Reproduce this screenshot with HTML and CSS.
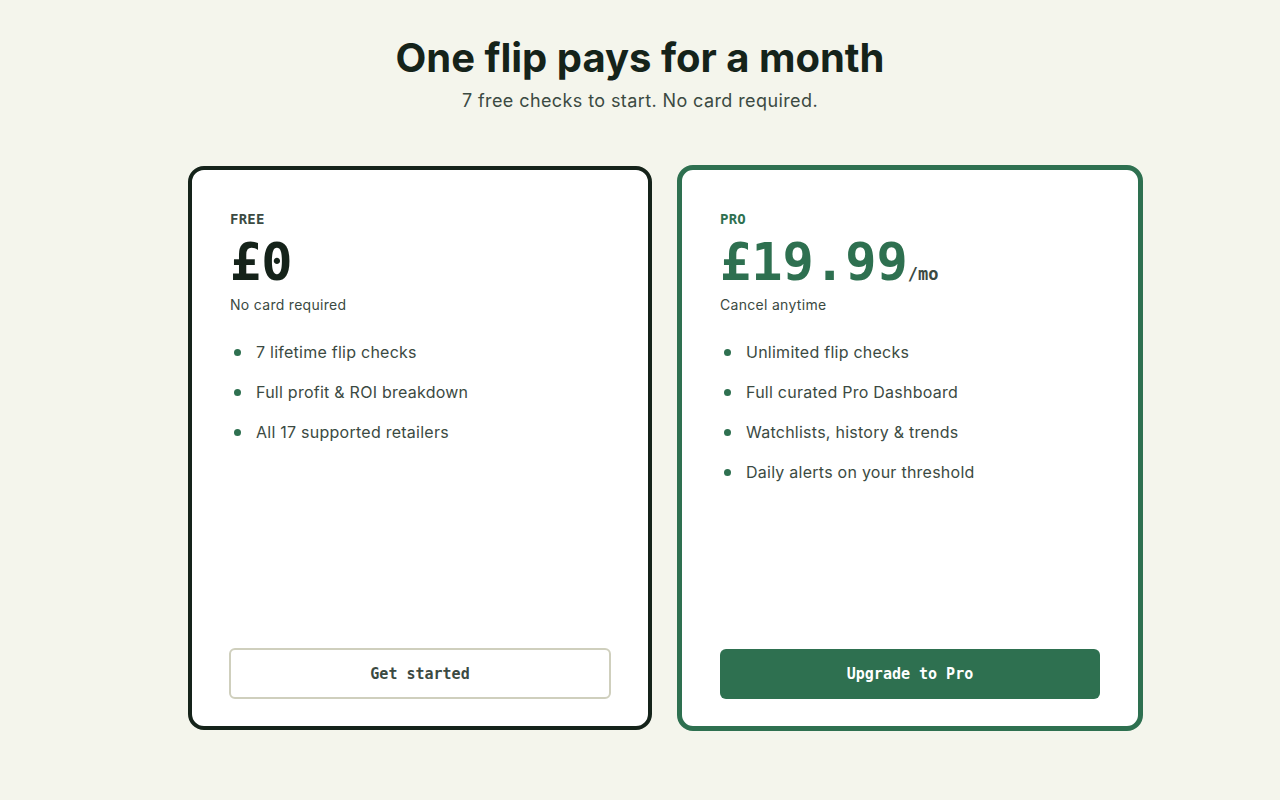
FILE: index.html
```html
<!DOCTYPE html>
<html lang="en">
<head>
    <meta charset="UTF-8">
    <meta name="viewport" content="width=device-width, initial-scale=1.0">
    <title>Pricing</title>
    <link rel="stylesheet" href="styles.css">
</head>
<body>
<section class="pricing">
    <div class="pricing-head">
        <h1>One flip pays for a month</h1>
        <p>7 free checks to start. No card required.</p>
    </div>

    <div class="plans">
        <!-- Free plan -->
        <div class="plan plan-free">
            <div class="plan-name">FREE</div>
            <div class="plan-price">£0</div>
            <div class="plan-note">No card required</div>
            <ul class="plan-features">
                <li>7 lifetime flip checks</li>
                <li>Full profit &amp; ROI breakdown</li>
                <li>All 17 supported retailers</li>
            </ul>
            <button class="plan-button">Get started</button>
        </div>

        <!-- Pro plan -->
        <div class="plan plan-pro">
            <div class="plan-name">PRO</div>
            <div class="plan-price">£19.99<span class="per">/mo</span></div>
            <div class="plan-note">Cancel anytime</div>
            <ul class="plan-features">
                <li>Unlimited flip checks</li>
                <li>Full curated Pro Dashboard</li>
                <li>Watchlists, history &amp; trends</li>
                <li>Daily alerts on your threshold</li>
            </ul>
            <button class="plan-button">Upgrade to Pro</button>
        </div>
    </div>
</section>
</body>
</html>
```

FILE: styles.css
```css
body {
    margin: 0;
    background-color: #f4f5ec;
    font-family: Inter, "Open Sans", sans-serif;
    color: #3b4a42;
}
.pricing {
    padding-top: 34px;
}
.pricing-head {
    text-align: center;
}
.pricing-head h1 {
    margin: 0;
    font-size: 40px;
    font-weight: 700;
    line-height: 48px;
    color: #15231a;
}
.pricing-head p {
    margin: 8px 0 0;
    font-size: 18px;
    letter-spacing: 0.4px;
    line-height: 22px;
    color: #3b4a42;
}
.plans {
    display: flex;
    justify-content: center;
    padding-left: 51px;
    margin-top: 54px;
    gap: 25px;
}
.plan {
    box-sizing: border-box;
    display: flex;
    flex-direction: column;
    background-color: #fff;
    border-radius: 16px;
    padding: 41px 37px 27px 38px;
}
.plan-free {
    width: 464px;
    height: 564px;
    border: 4px solid #15231a;
}
.plan-pro {
    width: 466px;
    height: 566px;
    margin-top: -1px;
    border: 5px solid #2e7050;
}
.plan-name {
    font-family: "DejaVu Sans Mono", monospace;
    font-weight: 700;
    font-size: 14px;
    letter-spacing: 0.2px;
    line-height: 16px;
    color: #3b4a42;
}
.plan-pro .plan-name {
    color: #2e7050;
}
.plan-price {
    margin-top: 4px;
    font-family: "DejaVu Sans Mono", monospace;
    font-weight: 700;
    font-size: 52px;
    line-height: 62px;
    color: #15231a;
}
.plan-pro .plan-price {
    color: #2e7050;
}
.plan-price .per {
    font-size: 17px;
    line-height: 1;
    color: #3b4a42;
}
.plan-note {
    margin-top: 3px;
    font-size: 14px;
    letter-spacing: 0.3px;
    line-height: 18px;
}
.plan-features {
    list-style: none;
    margin: 27px 0 0;
    padding: 0;
}
.plan-features li {
    position: relative;
    padding-left: 26px;
    font-size: 16px;
    letter-spacing: 0.25px;
    line-height: 22px;
    margin-bottom: 18px;
}
.plan-features li::before {
    content: "";
    position: absolute;
    left: 4px;
    top: 8px;
    width: 7px;
    height: 7px;
    border-radius: 50%;
    background-color: #2e7050;
}
.plan-button {
    margin-top: auto;
    height: 51px;
    border-radius: 6px;
    font-family: "DejaVu Sans Mono", monospace;
    font-weight: 700;
    font-size: 15px;
    cursor: pointer;
}
.plan-free .plan-button {
    margin-left: -1px;
    background-color: #fff;
    border: 2px solid #cfcfbd;
    color: #3b4a42;
}
.plan-pro .plan-button {
    width: 380px;
    height: 50px;
    background-color: #2e7050;
    border: none;
    color: #fff;
}
```
